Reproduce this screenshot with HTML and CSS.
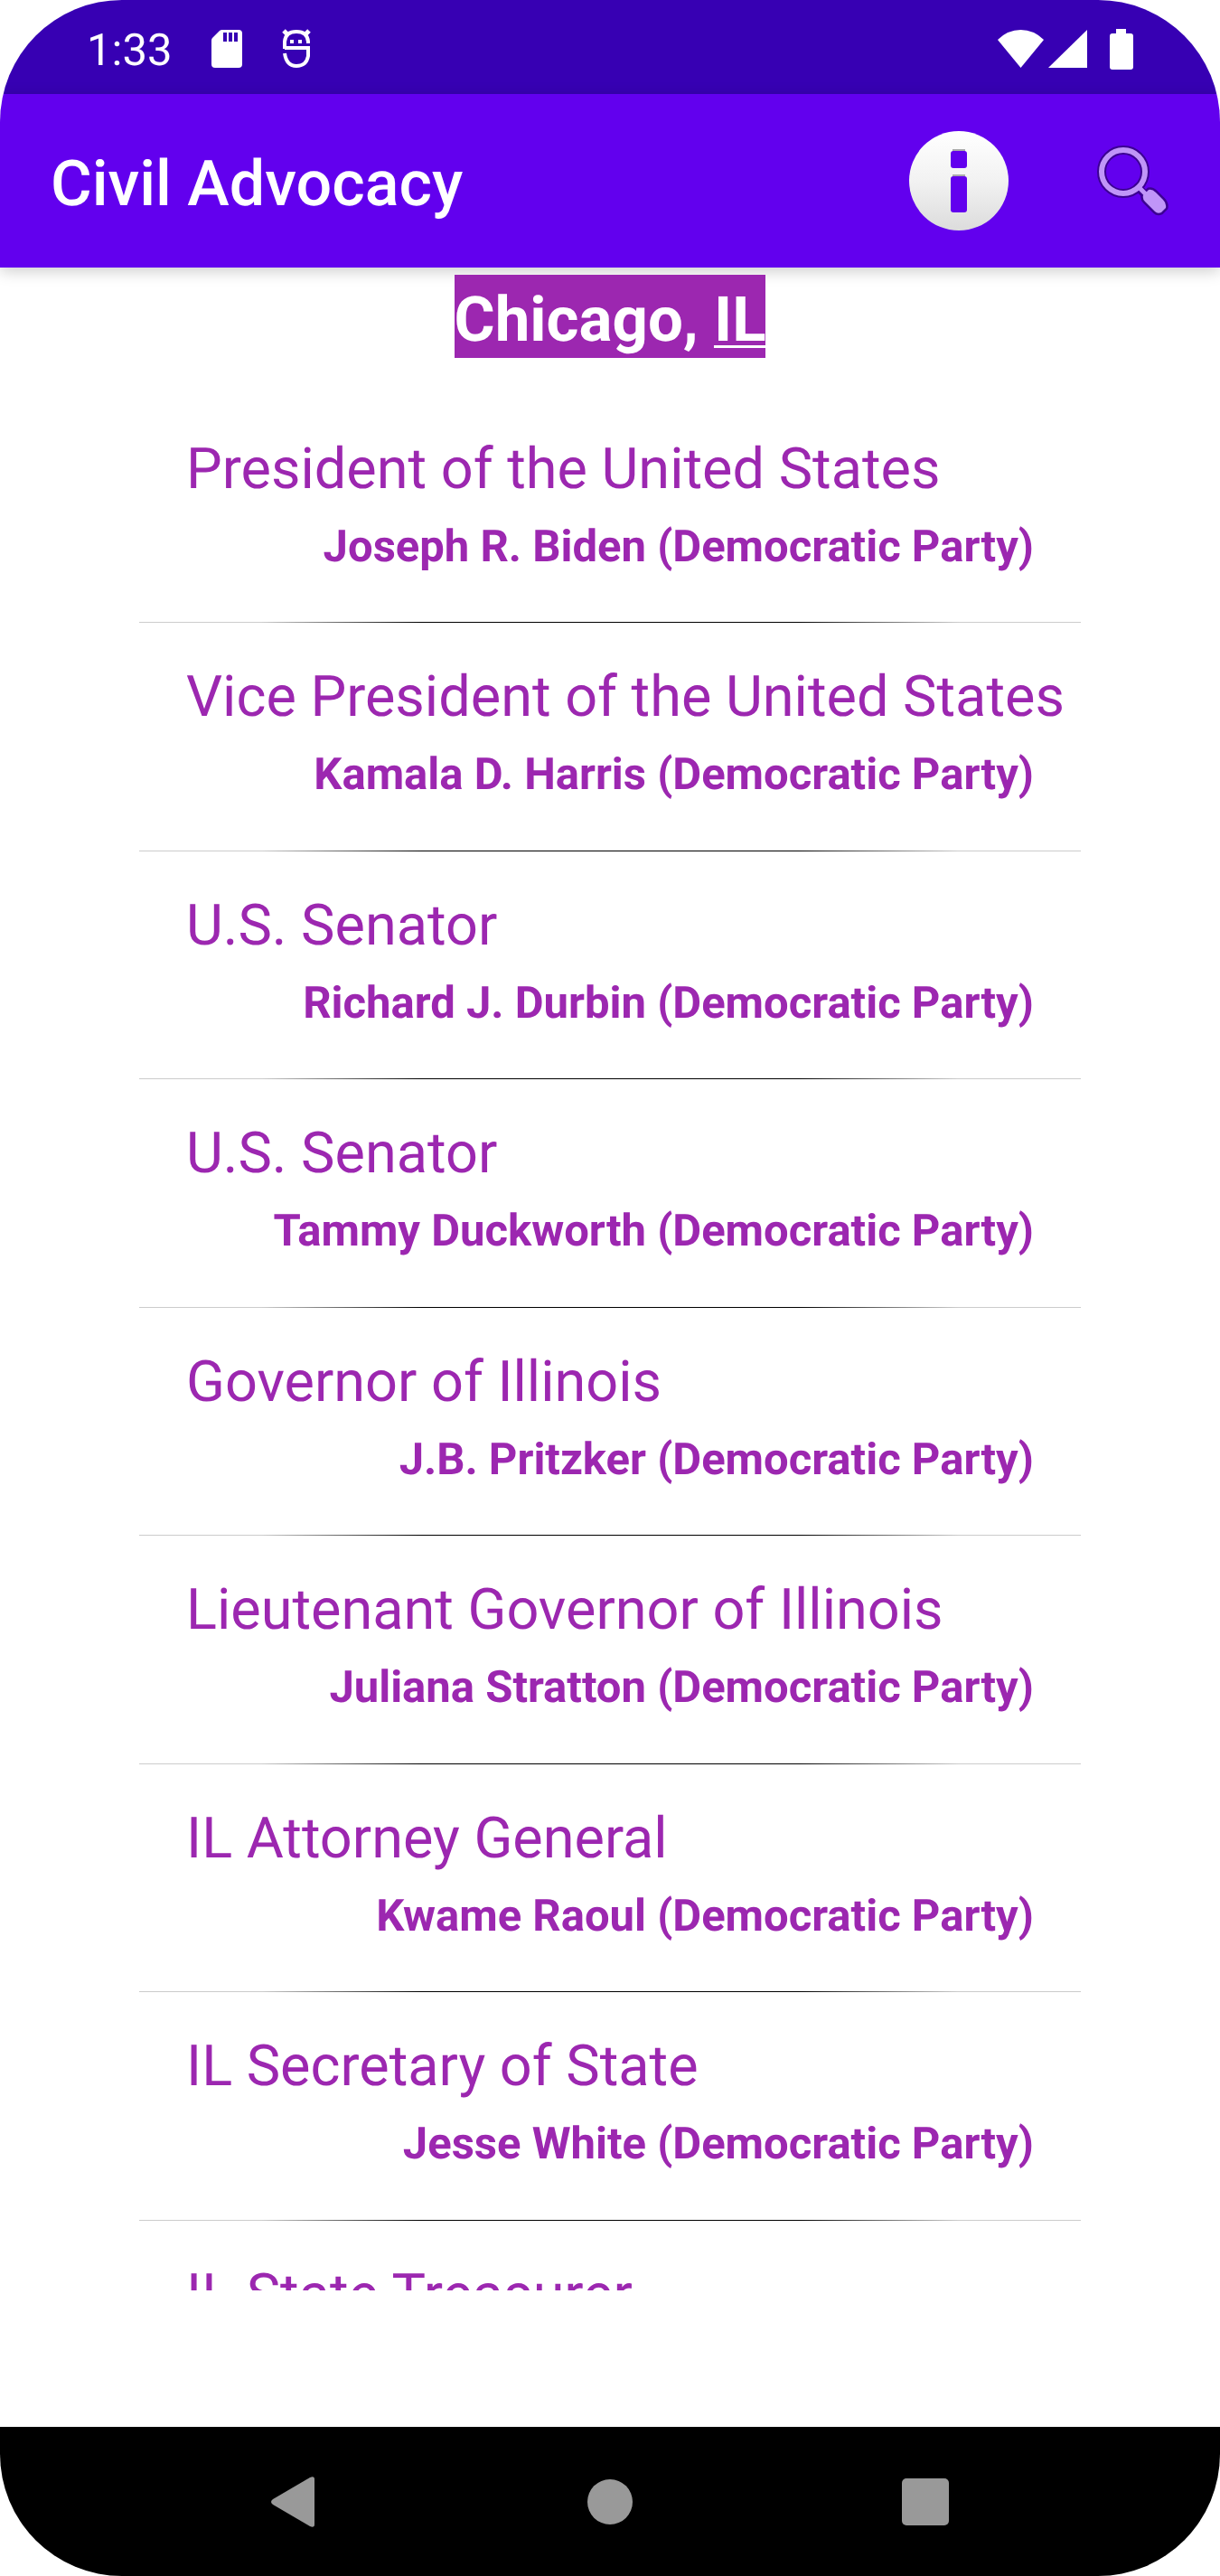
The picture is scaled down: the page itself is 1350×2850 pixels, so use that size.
FILE: index.html
```html
<!DOCTYPE html>
<html lang="en">
<head>
<meta charset="utf-8">
<meta name="viewport" content="width=device-width, initial-scale=1">
<title>Civil Advocacy</title>
<link rel="stylesheet" href="styles.css">
</head>
<body>
<div class="screen">
  <div class="status-bar">
    <span class="clock">1:33</span>
    <svg class="sd-icon" width="36" height="44" viewBox="0 0 36 44" aria-hidden="true">
      <path fill="#fff" d="M13 1h18q4 0 4 4v34q0 4-4 4H5q-4 0-4-4V13q0-2 1-3l8-8q1-1 3-1z"/>
      <path stroke="#3700b3" stroke-width="4" d="M16 4v10M22 4v10M28 4v10"/>
    </svg>
    <svg class="mascot-icon" width="32" height="44" viewBox="0 0 32 44" fill="none" stroke="#fff" aria-hidden="true">
      <path stroke-width="4" d="M3 22V14Q4 3 16 3t13 11v2M3 21h26v9q-2 11-13 11T3 27"/>
      <path stroke-width="5" d="M2 2l5 5M30 2l-5 5"/>
      <path stroke-width="4" d="M9 14h4M18 14h4"/>
    </svg>
    <div class="signals">
      <svg width="100" height="44" viewBox="0 0 100 44" fill="#fff" aria-hidden="true">
        <path d="M0 12Q11 1 25.500 1T51 12L25.500 43z"/>
        <path d="M56 43L99 1v42z"/>
      </svg>
      <svg width="26" height="45" viewBox="0 0 26 45" fill="#fff" aria-hidden="true">
        <path d="M7 0h11v5h5q3 0 3 3v34q0 3-3 3H3q-3 0-3-3V8q0-3 3-3h4z"/>
      </svg>
    </div>
  </div>
  <header class="app-bar">
    <h1 class="app-title">Civil Advocacy</h1>
    <button class="icon-button" type="button" aria-label="About">
      <svg width="110" height="110" viewBox="0 0 110 110" aria-hidden="true">
        <defs>
          <linearGradient id="disc" x1="0" y1="0" x2="0" y2="1">
            <stop offset="0" stop-color="#fff"/><stop offset=".5" stop-color="#f2f2f2"/><stop offset="1" stop-color="#dcdcdc"/>
          </linearGradient>
        </defs>
        <circle cx="55" cy="55" r="55" fill="url(#disc)"/>
        <path fill="#aaa" d="M48 20h14v4H48zM48 48h14v4H48z"/>
        <rect x="46" y="22" width="18" height="19" rx="3" fill="#6200ee"/>
        <rect x="46" y="50" width="18" height="40" rx="3" fill="#6200ee"/>
      </svg>
    </button>
    <button class="icon-button" type="button" aria-label="Search">
      <svg width="80" height="80" viewBox="0 0 80 80" fill="none" aria-hidden="true">
        <g stroke="#3b0091" stroke-linecap="round" stroke-linejoin="round">
          <circle cx="29" cy="30" r="24" stroke-width="10"/>
          <path stroke-width="9" d="M45 47l8 8"/>
          <path stroke-width="5" fill="#3b0091" d="M51 56l6-6q4-1 8 3l8 8q4 4 3 9l-5 5q-4 2-7-1L53 63q-3-3-2-7z"/>
        </g>
        <circle cx="29" cy="30" r="24" stroke="#c095f8" stroke-width="6"/>
        <path stroke="#c095f8" stroke-width="5" d="M45 46l9 9"/>
        <path fill="#c095f8" d="M51 56l6-6q4-1 8 3l8 8q4 4 3 9l-5 5q-4 2-7-1L53 63q-3-3-2-7z"/>
      </svg>
    </button>
  </header>
  <main class="content">
    <h2 class="location">Chicago, <span class="state">IL</span></h2>
    <ul class="officials">
      <li class="official"><p class="office">President of the United States</p><p class="name">Joseph R. Biden (Democratic Party)</p></li>
      <li class="official"><p class="office">Vice President of the United States</p><p class="name">Kamala D. Harris (Democratic Party)</p></li>
      <li class="official"><p class="office">U.S. Senator</p><p class="name">Richard J. Durbin (Democratic Party)</p></li>
      <li class="official"><p class="office">U.S. Senator</p><p class="name">Tammy Duckworth (Democratic Party)</p></li>
      <li class="official"><p class="office">Governor of Illinois</p><p class="name">J.B. Pritzker (Democratic Party)</p></li>
      <li class="official"><p class="office">Lieutenant Governor of Illinois</p><p class="name">Juliana Stratton (Democratic Party)</p></li>
      <li class="official"><p class="office">IL Attorney General</p><p class="name">Kwame Raoul (Democratic Party)</p></li>
      <li class="official"><p class="office">IL Secretary of State</p><p class="name">Jesse White (Democratic Party)</p></li>
      <li class="official"><p class="office">IL State Treasurer</p></li>
    </ul>
  </main>
  <nav class="nav-bar" aria-label="System">
    <button class="nav-button" type="button" aria-label="Back">
      <svg width="52" height="56" viewBox="0 0 52 56" aria-hidden="true"><path fill="#999" d="M2 25L43 1q5-2 5 2v50q0 4-5 2L2 31q-4-3 0-6z"/></svg>
    </button>
    <button class="nav-button" type="button" aria-label="Home">
      <svg width="50" height="52" viewBox="0 0 50 52" aria-hidden="true"><circle cx="25" cy="26" r="25" fill="#999"/></svg>
    </button>
    <button class="nav-button" type="button" aria-label="Recent apps">
      <svg width="52" height="52" viewBox="0 0 52 52" aria-hidden="true"><rect width="52" height="52" rx="5" fill="#999"/></svg>
    </button>
  </nav>
</div>
</body>
</html>
```
FILE: styles.css
```css
* {
  box-sizing: border-box;
}

body {
  margin: 0;
  background: #fff;
  font-family: Roboto, "Liberation Sans", sans-serif;
  text-rendering: geometricPrecision;
}

h1, h2, p, ul {
  margin: 0;
  padding: 0;
}

button {
  display: flex;
  padding: 0;
  border: 0;
  background: none;
}

svg {
  display: block;
}

.screen {
  display: flex;
  flex-direction: column;
  height: 100vh;
  overflow: hidden;
  border-radius: 135px;
  background: #fff;
}

.status-bar {
  display: flex;
  flex: none;
  align-items: center;
  height: 104px;
  padding: 4px 96px 0;
  background: #3700b3;
  color: #fff;
}

.clock {
  padding-top: 4px;
  font-size: 49px;
  line-height: 60px;
}

.sd-icon {
  margin-left: 43px;
}

.mascot-icon {
  margin-left: 43px;
}

.signals {
  display: flex;
  gap: 24px;
  margin-left: auto;
}

.app-bar {
  position: relative;
  display: flex;
  flex: none;
  align-items: center;
  height: 192px;
  padding: 0 56px;
  background: #6200ee;
  box-shadow: 0 4px 16px rgba(0, 0, 0, 0.2);
  color: #fff;
}

.app-title {
  flex: 1;
  padding-top: 8px;
  font-size: 70px;
  font-weight: 500;
  line-height: 84px;
}

.icon-button + .icon-button {
  margin-left: 98px;
}

.content {
  display: flex;
  flex: 1;
  flex-direction: column;
  align-items: center;
  min-height: 0;
  padding: 8px 154px 151px;
}

.location {
  position: relative;
  flex: none;
  margin-bottom: 41px;
  padding-top: 8px;
  background: #9c27b0;
  color: #fff;
  font-size: 69px;
  font-weight: 700;
  line-height: 84px;
}

.state {
  text-decoration: underline;
  text-decoration-thickness: 3px;
  text-underline-offset: 5px;
}

.officials {
  flex: 1;
  width: 100%;
  min-height: 0;
  overflow-y: auto;
  scrollbar-width: none;
  color: #9c27b0;
  list-style: none;
}

.official {
  padding: 37px 0 46px 52px;
  background: linear-gradient(90deg, #ccc 13%, #000 30%, #000 70%, #ccc 87%) bottom / 100% 1px no-repeat;
}

.official:nth-child(even) {
  padding-bottom: 47px;
}

.office {
  font-size: 63px;
  line-height: 92px;
  white-space: nowrap;
}

.name {
  padding-top: 1px;
  padding-right: 52px;
  font-size: 49px;
  font-weight: 700;
  line-height: 76px;
  text-align: right;
}

.nav-bar {
  display: flex;
  flex: none;
  align-items: center;
  justify-content: center;
  gap: 298px;
  height: 165px;
  background: #000;
}
```
